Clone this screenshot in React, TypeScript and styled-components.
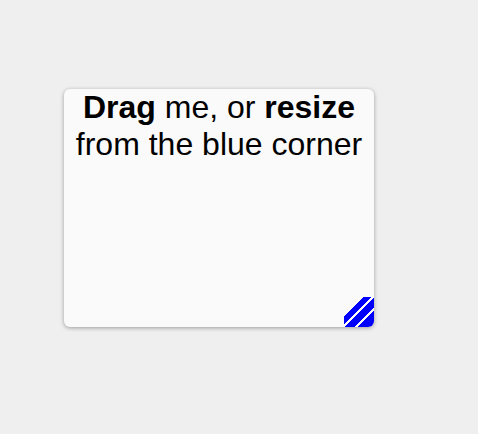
import styled, { createGlobalStyle } from "styled-components";

const GlobalStyle = createGlobalStyle`
  html, body {
    margin: 0;
    padding: 0;
    background: #efefef;
  }
  body {
    font-family: "Liberation Sans", Arial, Helvetica, sans-serif;
  }
`;

const Stage = styled.div`
  position: relative;
  width: 478px;
  height: 434px;
  overflow: hidden;
`;

// draggable box, its place on the canvas is the content
const Box = styled.div<{ $x: number; $y: number; $w: number; $h: number }>`
  position: absolute;
  left: ${(p) => p.$x}px;
  top: ${(p) => p.$y}px;
  width: ${(p) => p.$w}px;
  height: ${(p) => p.$h}px;
  box-sizing: border-box;
  background: #fafafa;
  border-radius: 6px;
  box-shadow: 0 1px 4px rgba(0, 0, 0, 0.35);
  text-align: center;
  color: #000;
  font-size: 32px;
  line-height: 37px;
`;

const Caption = styled.p`
  margin: 0;
  padding: 0 4px;
`;

const Handle = styled.div`
  position: absolute;
  right: 0;
  bottom: 0;
  width: 30px;
  height: 30px;
  border-bottom-right-radius: 6px;
  background: linear-gradient(
    135deg,
    transparent 0 32%,
    #0000ff 32% 46%,
    #ffffff 46% 50%,
    #0000ff 50% 68%,
    #ffffff 68% 72%,
    #0000ff 72%
  );
  cursor: se-resize;
`;

const App = () => {
  return (
    <>
      <GlobalStyle />
      <Stage>
        <Box $x={64} $y={89} $w={310} $h={238}>
          <Caption>
            <b>Drag</b> me, or <b>resize</b> from the blue corner
          </Caption>
          <Handle />
        </Box>
      </Stage>
    </>
  );
};

export default App;
